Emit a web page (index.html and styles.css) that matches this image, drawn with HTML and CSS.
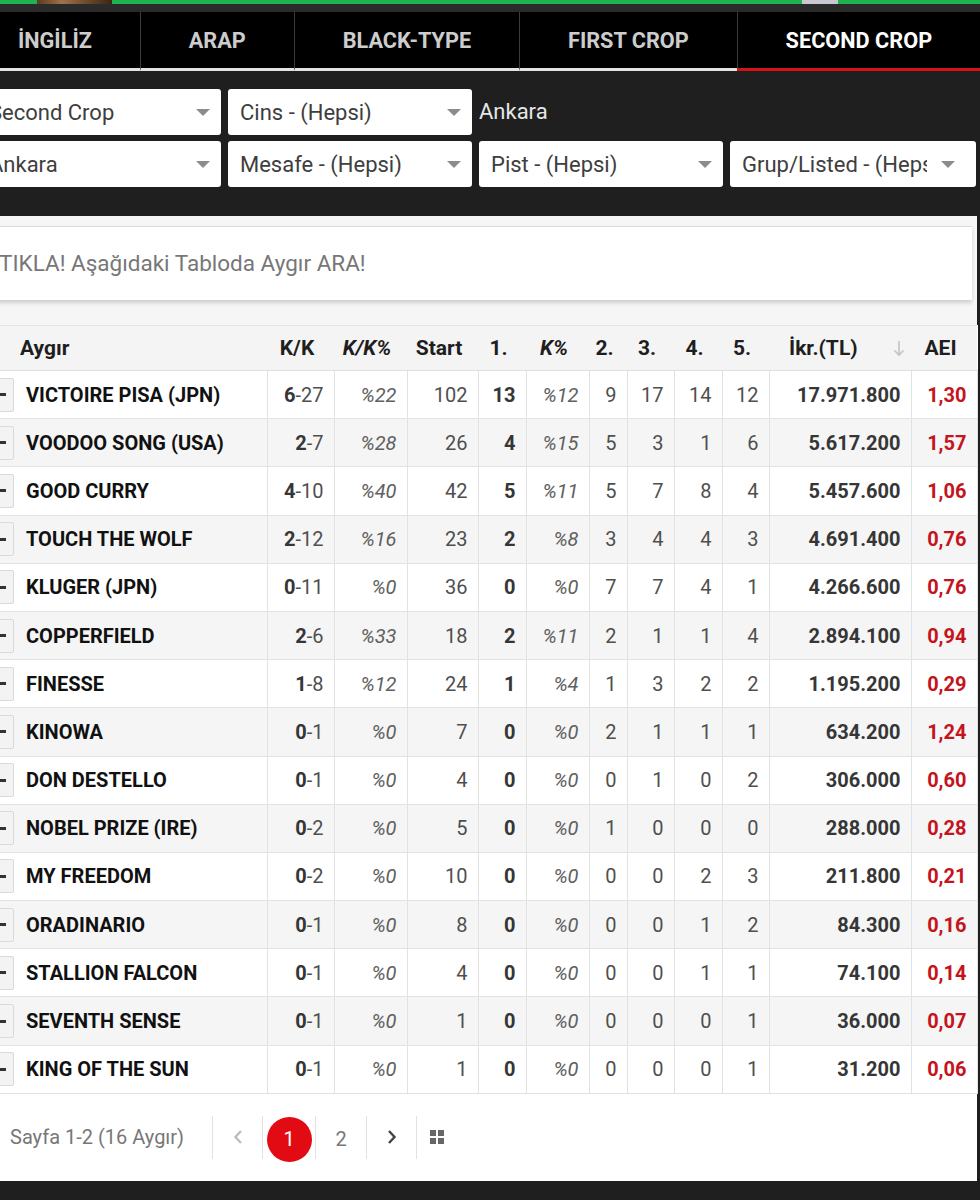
FILE: index.html
```html
<!DOCTYPE html>
<html lang="tr">
<head>
<meta charset="utf-8">
<title>Aygır İstatistikleri</title>
<link rel="stylesheet" href="styles.css">
</head>
<body>
<div class="topstrip"><span class="thumb-a"></span><span class="thumb-b"></span></div>
<div class="topgap"></div>
<nav class="tabs">
  <div class="tab">İNGİLİZ</div>
  <div class="tab">ARAP</div>
  <div class="tab">BLACK-TYPE</div>
  <div class="tab">FIRST CROP</div>
  <div class="tab active">SECOND CROP</div>
</nav>

<div class="filters">
  <div class="frow">
    <div class="sel"><span class="lbl">Second Crop</span><span class="caret"></span></div>
    <div class="sel"><span class="lbl">Cins - (Hepsi)</span><span class="caret"></span></div>
    <div class="plain">Ankara</div>
  </div>
  <div class="frow">
    <div class="sel"><span class="lbl">Ankara</span><span class="caret"></span></div>
    <div class="sel"><span class="lbl">Mesafe - (Hepsi)</span><span class="caret"></span></div>
    <div class="sel"><span class="lbl">Pist - (Hepsi)</span><span class="caret"></span></div>
    <div class="sel last"><span class="lbl">Grup/Listed - (Hepsi)</span><span class="caret"></span></div>
  </div>
</div>

<section class="panel">
  <div class="search">TIKLA! Aşağıdaki Tabloda Aygır ARA!</div>
  <table class="grid">
    <colgroup>
      <col class="c-btn"><col class="c-name"><col class="c-kk"><col class="c-kkp"><col class="c-start"><col class="c-1"><col class="c-kp"><col class="c-2"><col class="c-3"><col class="c-4"><col class="c-5"><col class="c-ikr"><col class="c-aei">
    </colgroup>
    <thead>
      <tr>
        <th></th>
        <th class="h-name">Aygır</th>
        <th>K/K</th>
        <th><i>K/K%</i></th>
        <th>Start</th>
        <th>1.</th>
        <th><i>K%</i></th>
        <th>2.</th>
        <th>3.</th>
        <th>4.</th>
        <th>5.</th>
        <th class="h-ikr"><div class="sorth"><span>İkr.(TL)</span><svg width="12" height="17" viewBox="0 0 12 17"><path d="M6 1 V15 M1.5 10.5 L6 15 L10.5 10.5" fill="none" stroke="#c4c4c4" stroke-width="1.6"/></svg></div></th>
        <th>AEI</th>
      </tr>
    </thead>
    <tbody>
      <tr><td class="bc"><span class="tog"></span></td><td class="name">VICTOIRE PISA (JPN)</td><td><b>6</b>-27</td><td class="it">%22</td><td>102</td><td class="b">13</td><td class="it">%12</td><td>9</td><td>17</td><td>14</td><td>12</td><td class="b">17.971.800</td><td class="aei">1,30</td></tr>
      <tr><td class="bc"><span class="tog"></span></td><td class="name">VOODOO SONG (USA)</td><td><b>2</b>-7</td><td class="it">%28</td><td>26</td><td class="b">4</td><td class="it">%15</td><td>5</td><td>3</td><td>1</td><td>6</td><td class="b">5.617.200</td><td class="aei">1,57</td></tr>
      <tr><td class="bc"><span class="tog"></span></td><td class="name">GOOD CURRY</td><td><b>4</b>-10</td><td class="it">%40</td><td>42</td><td class="b">5</td><td class="it">%11</td><td>5</td><td>7</td><td>8</td><td>4</td><td class="b">5.457.600</td><td class="aei">1,06</td></tr>
      <tr><td class="bc"><span class="tog"></span></td><td class="name">TOUCH THE WOLF</td><td><b>2</b>-12</td><td class="it">%16</td><td>23</td><td class="b">2</td><td class="it">%8</td><td>3</td><td>4</td><td>4</td><td>3</td><td class="b">4.691.400</td><td class="aei">0,76</td></tr>
      <tr><td class="bc"><span class="tog"></span></td><td class="name">KLUGER (JPN)</td><td><b>0</b>-11</td><td class="it">%0</td><td>36</td><td class="b">0</td><td class="it">%0</td><td>7</td><td>7</td><td>4</td><td>1</td><td class="b">4.266.600</td><td class="aei">0,76</td></tr>
      <tr><td class="bc"><span class="tog"></span></td><td class="name">COPPERFIELD</td><td><b>2</b>-6</td><td class="it">%33</td><td>18</td><td class="b">2</td><td class="it">%11</td><td>2</td><td>1</td><td>1</td><td>4</td><td class="b">2.894.100</td><td class="aei">0,94</td></tr>
      <tr><td class="bc"><span class="tog"></span></td><td class="name">FINESSE</td><td><b>1</b>-8</td><td class="it">%12</td><td>24</td><td class="b">1</td><td class="it">%4</td><td>1</td><td>3</td><td>2</td><td>2</td><td class="b">1.195.200</td><td class="aei">0,29</td></tr>
      <tr><td class="bc"><span class="tog"></span></td><td class="name">KINOWA</td><td><b>0</b>-1</td><td class="it">%0</td><td>7</td><td class="b">0</td><td class="it">%0</td><td>2</td><td>1</td><td>1</td><td>1</td><td class="b">634.200</td><td class="aei">1,24</td></tr>
      <tr><td class="bc"><span class="tog"></span></td><td class="name">DON DESTELLO</td><td><b>0</b>-1</td><td class="it">%0</td><td>4</td><td class="b">0</td><td class="it">%0</td><td>0</td><td>1</td><td>0</td><td>2</td><td class="b">306.000</td><td class="aei">0,60</td></tr>
      <tr><td class="bc"><span class="tog"></span></td><td class="name">NOBEL PRIZE (IRE)</td><td><b>0</b>-2</td><td class="it">%0</td><td>5</td><td class="b">0</td><td class="it">%0</td><td>1</td><td>0</td><td>0</td><td>0</td><td class="b">288.000</td><td class="aei">0,28</td></tr>
      <tr><td class="bc"><span class="tog"></span></td><td class="name">MY FREEDOM</td><td><b>0</b>-2</td><td class="it">%0</td><td>10</td><td class="b">0</td><td class="it">%0</td><td>0</td><td>0</td><td>2</td><td>3</td><td class="b">211.800</td><td class="aei">0,21</td></tr>
      <tr><td class="bc"><span class="tog"></span></td><td class="name">ORADINARIO</td><td><b>0</b>-1</td><td class="it">%0</td><td>8</td><td class="b">0</td><td class="it">%0</td><td>0</td><td>0</td><td>1</td><td>2</td><td class="b">84.300</td><td class="aei">0,16</td></tr>
      <tr><td class="bc"><span class="tog"></span></td><td class="name">STALLION FALCON</td><td><b>0</b>-1</td><td class="it">%0</td><td>4</td><td class="b">0</td><td class="it">%0</td><td>0</td><td>0</td><td>1</td><td>1</td><td class="b">74.100</td><td class="aei">0,14</td></tr>
      <tr><td class="bc"><span class="tog"></span></td><td class="name">SEVENTH SENSE</td><td><b>0</b>-1</td><td class="it">%0</td><td>1</td><td class="b">0</td><td class="it">%0</td><td>0</td><td>0</td><td>0</td><td>1</td><td class="b">36.000</td><td class="aei">0,07</td></tr>
      <tr><td class="bc"><span class="tog"></span></td><td class="name">KING OF THE SUN</td><td><b>0</b>-1</td><td class="it">%0</td><td>1</td><td class="b">0</td><td class="it">%0</td><td>0</td><td>0</td><td>0</td><td>1</td><td class="b">31.200</td><td class="aei">0,06</td></tr>
    </tbody>
  </table>
  <div class="pager">
    <span class="pinfo">Sayfa 1-2 (16 Aygır)</span>
    <span class="pg"><svg width="10" height="16" viewBox="0 0 10 16"><path d="M8 2 L2.5 8 L8 14" fill="none" stroke="#bdbdbd" stroke-width="2.4"/></svg></span>
    <span class="pg"><span class="cur">1</span></span>
    <span class="pg num">2</span>
    <span class="pg"><svg width="10" height="16" viewBox="0 0 10 16"><path d="M2 2 L7.5 8 L2 14" fill="none" stroke="#444" stroke-width="2.4"/></svg></span>
    <span class="pg gridic"><span class="sq"></span><span class="sq"></span><span class="sq"></span><span class="sq"></span></span>
  </div>
</section>
</body>
</html>
```
FILE: styles.css
```css
* { box-sizing: border-box; }
html, body { margin: 0; padding: 0; }
body {
  width: 980px;
  height: 1200px;
  overflow: hidden;
  background: #1f1f1f;
  font-family: Roboto, "Noto Sans", "Liberation Sans", sans-serif;
}

.topstrip { height: 4px; background: #20b24f; display: flex; }
.thumb-a { margin-left: 37px; width: 75px; background: linear-gradient(90deg, #5a3b22, #a07248, #6b4a2e, #3d2614); }
.thumb-b { margin-left: 690px; width: 36px; background: #c9c7cf; }
.topgap { height: 8px; background: #2b2b2b; }

.tabs {
  display: flex;
  margin-left: -30px;
  width: 1010px;
  background: #000;
}
.tab {
  flex: 1 1 auto;
  text-align: center;
  height: 59px;
  line-height: 57px;
  color: #cdcdcd;
  font-weight: 700;
  font-size: 21.7px;
  border-bottom: 3px solid #e3e3e3;
  border-left: 1px solid #3c3c3c;
  white-space: nowrap;
}
.tab:first-child { border-left: 0; }
.tab.active { color: #fff; border-bottom-color: #d6131c; }

.filters {
  margin: 18px 0 0 -23px;
  display: flex;
  flex-direction: column;
  gap: 6px;
}
.frow { display: flex; gap: 7px; }
.sel {
  width: 244px;
  height: 46px;
  background: #fff;
  border-radius: 3px;
  display: flex;
  align-items: center;
  padding: 0 11px 0 12px;
  font-size: 22px;
  color: #3e3e3e;
}
.sel .lbl { flex: 1 1 auto; white-space: nowrap; overflow: hidden; }
.sel .caret {
  flex: none;
  width: 0; height: 0;
  border-left: 7px solid transparent;
  border-right: 7px solid transparent;
  border-top: 7px solid #8c8c8c;
}
.sel.last { width: 246px; padding-right: 21px; }
.sel.last .lbl { margin-right: 14px; }
.plain { color: #e6e6e6; font-size: 22px; line-height: 46px; }

.panel {
  margin: 29px 0 0 -20px;
  width: 997px;
  background: #f6f6f6;
  padding-top: 10px;
}
.search {
  background: #fff;
  border-top: 1px solid #dcdcdc;
  height: 74px;
  margin: 0 5px 25px 0;
  box-shadow: 0 3px 4px rgba(0, 0, 0, 0.16);
  padding-left: 19px;
  font-size: 22.5px;
  color: #777;
  line-height: 72px;
  white-space: nowrap;
}

.grid {
  border-collapse: collapse;
  table-layout: fixed;
  width: 997px;
  background: #fff;
  font-size: 20px;
}
.c-btn { width: 34px; }
.c-name { width: 253px; }
.c-kk { width: 67px; }
.c-kkp { width: 73px; }
.c-start { width: 71px; }
.c-1 { width: 48px; }
.c-kp { width: 63px; }
.c-2 { width: 38px; }
.c-3 { width: 47px; }
.c-4 { width: 48px; }
.c-5 { width: 47px; }
.c-ikr { width: 142px; }
.c-aei { width: 66px; }

.grid th {
  height: 45px;
  background: #f4f4f4;
  border-top: 1px solid #e4e4e4;
  border-bottom: 1px solid #dedede;
  font-weight: 700;
  font-size: 21px;
  color: #1e1e1e;
  text-align: center;
  padding: 0 7px 0 0;
  white-space: nowrap;
}
.grid th.h-name { text-align: left; padding-left: 6px; }
.grid th.h-ikr { padding: 0 6px 0 20px; }
.sorth { display: flex; align-items: center; justify-content: space-between; }
.sorth svg { display: block; }

.grid td {
  height: 48.2px;
  border: 1px solid #e2e2e2;
  text-align: right;
  padding: 0 10px 0 0;
  color: #4f4f4f;
  white-space: nowrap;
}
.grid tbody tr:nth-child(even) td { background: #f5f5f5; }
.grid td b, .grid td.b { font-weight: 700; color: #363636; }
.grid td.it { font-style: italic; color: #606060; }
.grid td.aei { font-weight: 700; color: #c4141c; }
.grid td.bc { border-right: 0; border-left: 0; padding: 0 0 0 9px; text-align: left; }
.grid td.name { border-left: 0; text-align: left; padding-left: 12px; font-weight: 700; color: #111; }
.tog {
  display: flex;
  align-items: center;
  justify-content: center;
  width: 25px;
  height: 34px;
  border: 1px solid #dadada;
  border-radius: 2px;
  background: #f3f3f3;
}
.tog::before { content: ""; width: 9px; height: 3px; background: #333; }

.pager {
  display: flex;
  align-items: center;
  height: 87px;
  background: #fff;
  padding-left: 30px;
}
.pinfo { font-size: 20px; color: #777; padding-right: 28px; white-space: nowrap; }
.pg {
  width: 50px;
  height: 43px;
  border-left: 1px solid #e2e2e2;
  display: flex;
  align-items: center;
  justify-content: center;
  font-size: 20px;
  color: #777;
}
.pg:nth-child(3) { width: 53px; }
.pg.num { width: 51px; padding-top: 3px; }
.cur {
  width: 45px;
  height: 45px;
  border-radius: 50%;
  background: #e30b13;
  color: #fff;
  display: flex;
  align-items: center;
  justify-content: center;
  font-size: 20px;
  margin-top: 4px;
}
.gridic {
  display: grid;
  grid-template-columns: 6px 6px;
  grid-template-rows: 6px 6px;
  gap: 2px;
  justify-content: start;
  align-content: center;
  padding-left: 13px;
}
.sq { background: #666; width: 6px; height: 6px; }
```
